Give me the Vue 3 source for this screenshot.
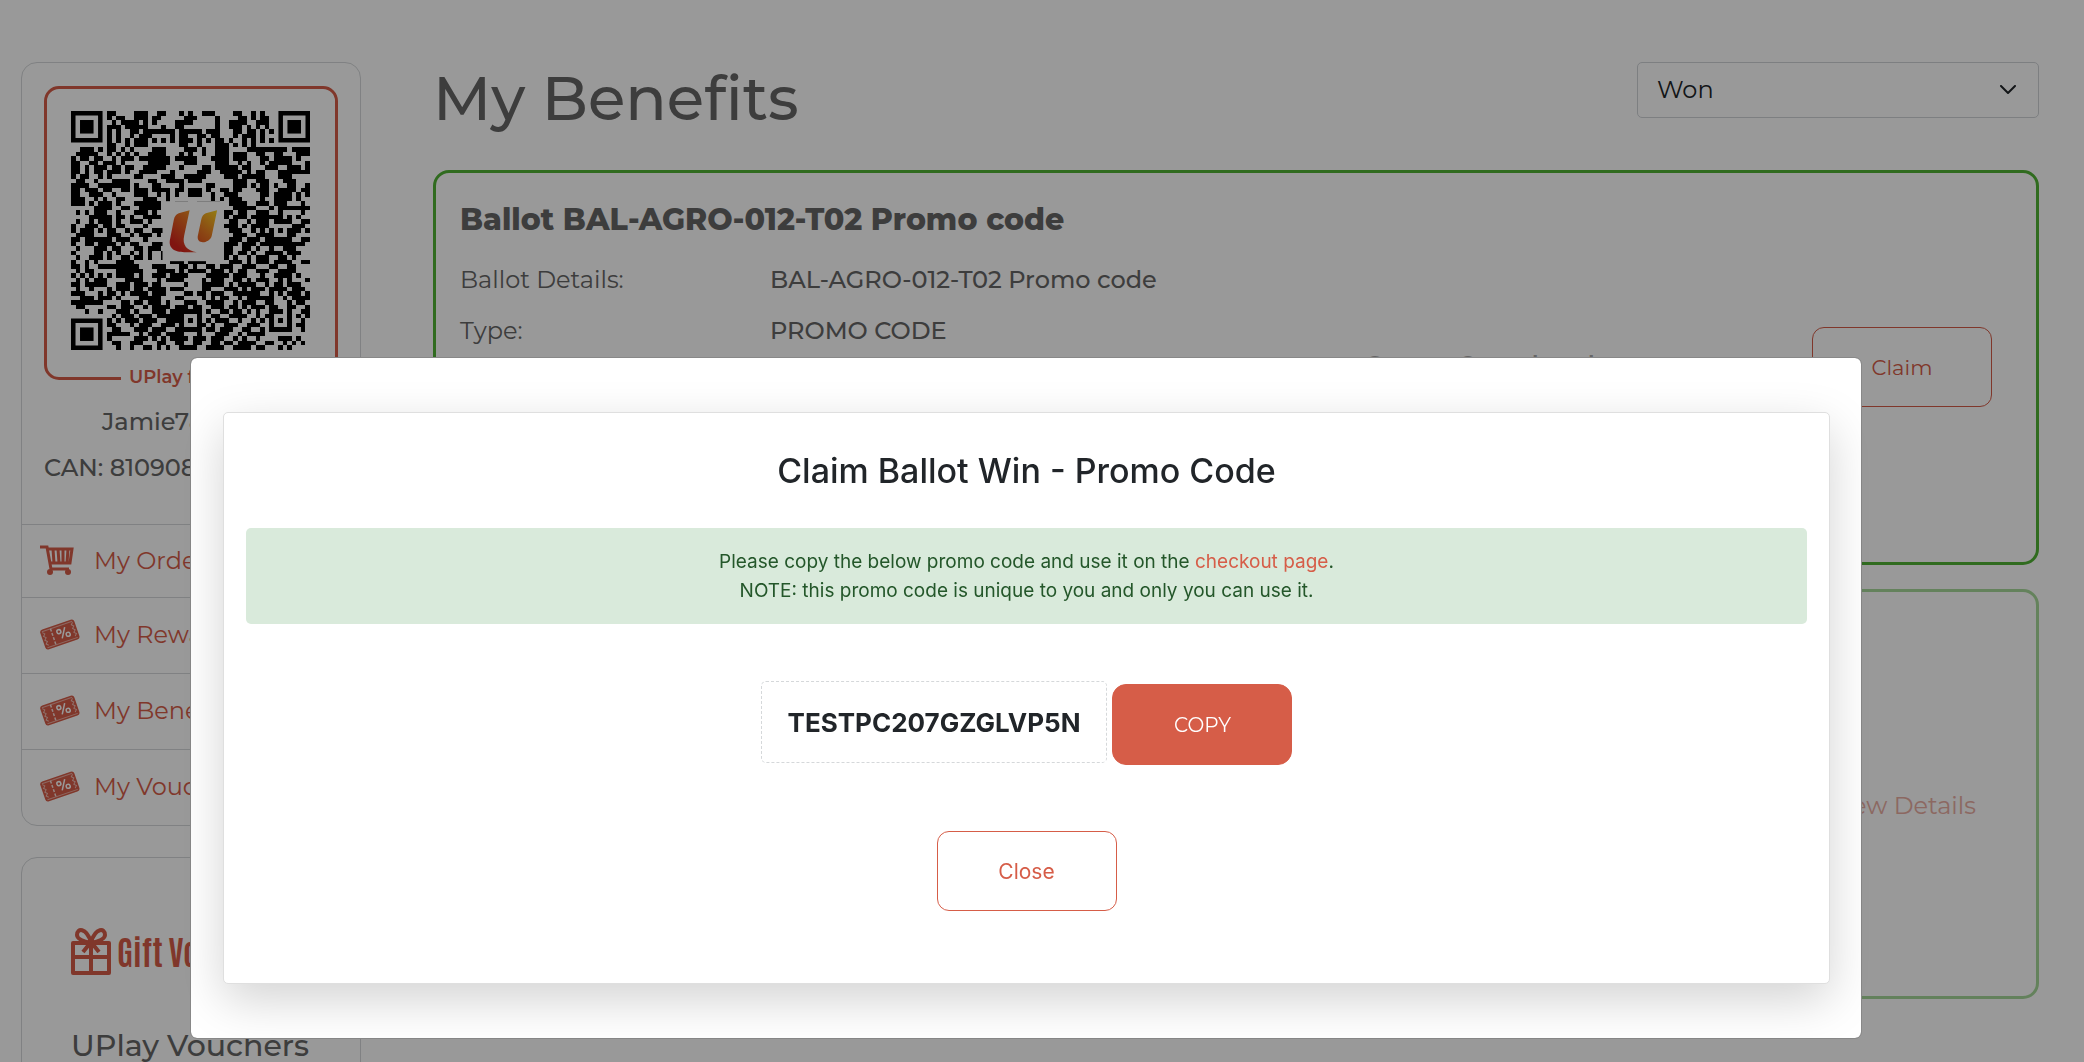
<script setup>
import { ref } from 'vue'

const filter = ref('Won')
const menu = [
  { label: 'My Orders', icon: 'cart' },
  { label: 'My Rewards', icon: 'ticket' },
  { label: 'My Benefits', icon: 'ticket' },
  { label: 'My Vouchers', icon: 'ticket' },
]

// Dark module runs of the membership code, one string per row (finder corners are drawn apart).
const rows = [
  '8-9 14-16 19-20 24 26 29-31 36-37 40 42',
  '8 10-11 14-16 18-19 25-27 32 37-38 40 42-43',
  '9 11-14 16 18 23-26 32 35-38 41-43',
  '8-10 12-16 20 23-24 32 35-37 39 41 43',
  '8 10 13-14 16-22 24-28 30-32 36-37 39-40 42 44',
  '8 10 13 15-17 22 24-25 28-29 31-32 36 38-40 42',
  '8 10 12 14-16 18 20 22 24-25 26 28 30 32-33 35 38 40 42 44',
  '8-9 12 14-15 16 24-25 28 32-34 36 38 40',
  '2-4 6 8-9 11 13 18-20 25-27 29 32-34 39-47 49-52',
  '1-4 5 8 10 12 14 17-20 24 26 29 32-34 36-38 41-42 45-46 50-52',
  '0 2-3 5-6 9 11-13 15-21 23-27 31-34 36-38 42-43 45-48 50',
  '0-1 4-5 7-9 11 17-21 25-27 32-34 37 39 42 44-48 52',
  '0-1 3 5-7 9-10 12-13 16-20 24 29-30 32-36 38-39 43-45 48-50 52',
  '0-1 3 5-6 8-10 12 15-18 22 28-30 33-37 39 41-42 46-51 52',
  '0 2-3 6 8 14-15 20-22 25-29 34-36 38-42 46-48',
  '1-2 5 9-12 17-18 21-24 26-28 36-37 38 41-43 47-49',
  '0-3 6-8 9-12 14 18 19 24 30-31 36-38 40 42-43 45 48-49 52',
  '0-1 3-5 7-8 11-12 14-16 18-21 23-24 26-28 30 33-34 36-37 41-43 46-49 51-52',
  '0-1 4-6 9 14-16 19 21 23 26-28 31 34-36 42-43 45-48 50 52',
  '0-2 5 7 10-11 16-18 21 31 33 35-37 42 45-47 48 50',
  '0-2 4 6-8 10 14-19 21 23-25 28-30 31-32 35-38 41-43 45-47 51',
  '5-8 11 12 15-19 36-39 40 44 46-48 49-52',
  '1 3 5-7 10 14-16 18 34-35 37-38 41-43 46 51',
  '4-8 10-11 13 16-19 34 36-38 40-42 43-46 48 50',
  '1 4 6-8 10 13-15 17 35-36 39 41-43 45-48 51-52',
  '0 3-5 7-8 10-11 16 34-36 38 40-43 49-51',
  '0 2-4 6 8-9 12 14-15 18-20 35-37 40 42 44 46 48-50 52',
  '1-4 8-10 13 15-17 19 36-38 41-43 44 48 49',
  '0-1 3-8 10-12 16 35-37 39-41 43-48 51-52',
  '0 3-4 6-8 9 11 13-14 18-20 34-36 38-40 42-51',
  '1 5-7 9-10 14-15 17-19 34-35 38-39 41 44 47-49',
  '0 5-6 8 10 13 15 17 20 34-35 37-38 40 43-46 48-50',
  '1 4-6 8 11-12 14-15 17 20 34 36 39 41-43 46-47 49',
  '0 3 5 10-12 13 22-24 26-29 35-37 39 41-43 45-48 51-52',
  '0-1 3 6-7 8-14 18-20 24-25 27 30-31 33-35 38-40 44-45 48-49',
  '1 3-4 10-15 19-22 24 26-29 31-33 35 37-38 41-43 46-49',
  '0 2 4 6 8 10-13 15 18-20 22-25 30-34 36-38 42 45-48 50',
  '1 3 5-7 12-15 19 21-24 29 31-33 36-37 39 41-43 46 48 52',
  '0-1 3-7 10-12 14-16 18-19 25 29-33 35 37-40 43 45-46 48-50',
  '1 4 8 10-12 14-15 17-20 22-24 29-30 34-36 38 40-42 44-47 49-51',
  '0-2 6 8-9 11 13-16 18-20 25-26 28-29 31-33 36-41 44 46 48-50 52',
  '2-4 6-8 10 15-19 23-24 29 31 33-34 37 39-43 44 47 49-52',
  '0-3 4-6 11-12 14-15 17-19 21 25-27 30-33 36 38-40 43-44 48 50-51',
  '1-2 8-9 11-13 16 18-21 23-25 27-28 31-33 35-36 38 40-42 44-45 48-49 52',
  '3 6 10-12 14 18-20 22-28 30 33-34 36-37 39 41 44-46 48 51-52',
  '9 11-13 15-17 19-24 28 31-32 35-38 41 43-44 48 50 52',
  '8 10 12-14 16-18 21-24 26 28 30 32-34 37 40 42 44 46 48 51',
  '8-9 13 15-17 20-22 24 28-29 31 34-36 39-41 44 48 50-51',
  '9-10 14-16 18-20 23-28 30-31 33-35 38-39 42 44-48 51',
  '8-12 15 17-19 21-24 28 32-34 37 39-42',
  '8 14-16 18 20 22-25 27-29 31-33 36 38 41 46-48 50',
  '9-10 13-15 19-20 23-24 27-28 31-32 34-35 37-40 43-44 47 49 51',
  '10 13 16-17 19 21 24-27 30-33 36-39 41-42 46 48',
]
const modules = rows
  .map((row, y) =>
    row.split(' ').map((run) => {
      const [a, b = a] = run.split('-').map(Number)
      return `M${a} ${y}h${b - a + 1}v1H${a}z`
    }).join('')
  )
  .join('')
</script>

<template>
  <div class="page">
    <aside class="sidebar">
      <section class="panel profile">
        <div class="member">
          <figure class="code-frame">
            <svg class="qr" viewBox="0 0 53 53" role="img" aria-label="Membership code">
              <path :d="modules" shape-rendering="crispEdges" />
              <g v-for="[x, y] in [[0, 0], [46, 0], [0, 46]]" :key="`${x}-${y}`">
                <path :d="`M${x} ${y}h7v7h-7zm1 1v5h5v-5z`" fill-rule="evenodd" />
                <rect :x="x + 2" :y="y + 2" width="3" height="3" />
              </g>
              <rect x="20.3" y="20" width="13.5" height="13.3" fill="#fff" />
              <defs>
                <linearGradient id="flame" x1="0" y1="1" x2="1" y2="0">
                  <stop offset="0.15" stop-color="#d5241c" />
                  <stop offset="0.6" stop-color="#e87722" />
                  <stop offset="1" stop-color="#f7d11e" />
                </linearGradient>
              </defs>
              <path
                fill="url(#flame)"
                d="M26.3 22l-2.4.7q-.9.4-1.1 1.4l-.8 4.2c-.6 2.300 1.200 3 3.100 3h2.800c-2.200-.3-3.300-1.600-2.800-3.700zM32.400 22l-2.500.7q-.8.4-1 1.300l-.8 3.800c-.2 2 2.600 1.500 3.100-.1z"
              />
            </svg>
            <figcaption>UPlay for All</figcaption>
          </figure>
          <p class="name">Jamie7890123</p>
          <p class="can">CAN: 8109081234567</p>
        </div>
        <nav>
          <a v-for="item in menu" :key="item.label" href="#" :class="item.icon">
            <svg v-if="item.icon === 'cart'" width="40" height="34" viewBox="0 0 40 34" fill="none" stroke="currentColor">
              <path d="M0 3h7l4 22h18" stroke-width="3" />
              <path d="M7 5h25l-2 14H10M13 5l1 14M18 5l1 14M23 5v14M28 5l-1 14" stroke-width="3" />
              <circle cx="10" cy="28" r="3" fill="currentColor" stroke="none" />
              <circle cx="28" cy="28" r="3" fill="currentColor" stroke="none" />
            </svg>
            <svg v-else width="40" height="34" viewBox="0 0 40 34">
              <g transform="rotate(-19 20 17)">
                <rect x="2" y="6" width="36" height="21" rx="3" fill="currentColor" />
                <path d="M4 8h32M4 25h32" stroke="#fff" stroke-opacity=".5" stroke-width="1" />
                <path d="M4 9l2 2-2 2 2 2-2 2 2 2-2 2 2 2M36 9l-2 2 2 2-2 2 2 2-2 2 2 2-2 2" fill="none" stroke="#fff" stroke-opacity=".6" />
                <path d="M13 8v17" stroke="#fff" stroke-opacity=".8" stroke-width="1.500" stroke-dasharray="3 1.500" />
                <path d="M21 21l6-10" stroke="#fff" stroke-width="1.500" />
                <circle cx="20" cy="13.500" r="2" fill="none" stroke="#fff" stroke-width="1.500" />
                <circle cx="28" cy="19" r="2" fill="none" stroke="#fff" stroke-width="1.500" />
              </g>
            </svg>
            <span>{{ item.label }}</span>
          </a>
        </nav>
      </section>

      <section class="panel gift">
        <div class="gift-brand">
          <svg width="40" height="47" viewBox="0 0 40 47" fill="none" stroke="currentColor" stroke-width="4" stroke-linejoin="round">
            <path d="M2 15h36v30H2zM2 29h36M20 15v30" />
            <path d="M20 14C15-1 6 0 6 7q0 5 14 8 14-3 14-8C34 0 25-1 20 14l-8 10M20 14l8 10" />
          </svg>
          <span>Gift Vouchers</span>
        </div>
        <h2>UPlay Vouchers</h2>
      </section>
    </aside>

    <main>
      <header class="title-bar">
        <h1>My Benefits</h1>
        <div class="select-wrap">
          <select v-model="filter" aria-label="Benefit status">
            <option>Won</option>
            <option>Applied</option>
          </select>
          <svg width="18" height="10" viewBox="0 0 18 10" fill="none" stroke="#212529" stroke-width="2" stroke-linecap="round" stroke-linejoin="round"><path d="M2 1l7 7 7-7" /></svg>
        </div>
      </header>

      <article class="benefit">
        <div class="info">
          <h3>Ballot BAL-AGRO-012-T02 Promo code</h3>
          <dl>
            <dt>Ballot Details:</dt>
            <dd>BAL-AGRO-012-T02 Promo code</dd>
            <dt>Type:</dt>
            <dd>PROMO CODE</dd>
          </dl>
        </div>
        <p class="status">Status: Completed</p>
        <button type="button" class="outline">Claim</button>
      </article>

      <article class="benefit past">
        <a href="#">View Details</a>
      </article>
    </main>

    <div class="overlay">
      <div class="dialog" role="dialog" aria-modal="true" aria-labelledby="claim-title">
        <div class="card">
          <h2 id="claim-title">Claim Ballot Win - Promo Code</h2>
          <p class="notice">
            Please copy the below promo code and use it on the <a href="#">checkout page</a>.<br />
            NOTE: this promo code is unique to you and only you can use it.
          </p>
          <div class="promo">
            <strong>TESTPC207GZGLVP5N</strong>
            <button type="button" class="solid">COPY</button>
          </div>
          <button type="button" class="outline close">Close</button>
        </div>
      </div>
    </div>
  </div>
</template>

<style>
body {
  overflow: hidden;
}
</style>

<style scoped>
.page {
  --coral: #d65d48;
  display: flex;
  gap: 72px;
  box-sizing: border-box;
  height: 100vh;
  padding: 62px 45px 0 21px;
  overflow: hidden;
  background: #fff;
  color: #666;
  font: 500 24px/32px Montserrat, Inter, sans-serif;
}
.page * {
  box-sizing: border-box;
}
h1, h2, h3, p, dl, dd, figure {
  margin: 0;
}
a {
  color: var(--coral);
  text-decoration: none;
}
button {
  width: 180px;
  height: 80px;
  border: 1px solid var(--coral);
  font-family: inherit;
  font-weight: 400;
  cursor: pointer;
}
.outline {
  border-radius: 12px;
  background: none;
  color: var(--coral);
  font-size: 21px;
}
.sidebar {
  flex: 0 0 340px;
  min-width: 0;
}
.panel {
  border: 1px solid #d5d8da;
  border-radius: 16px;
  overflow: hidden;
  white-space: nowrap;
}
.member {
  height: 461px;
  padding: 23px 22px 0;
}
.code-frame {
  position: relative;
  height: 294px;
  border: 3px solid var(--coral);
  border-radius: 15px;
  padding: 22px 24px;
}
.qr {
  display: block;
  width: 239px;
  height: 239px;
}
figcaption {
  position: absolute;
  bottom: -12px;
  left: 74px;
  padding: 0 8px;
  background: #fff;
  color: var(--coral);
  font-size: 18px;
  font-weight: 600;
  line-height: 24px;
}
.name {
  margin-top: 26px;
  padding-left: 58px;
}
.can {
  margin-top: 14px;
}
nav a {
  display: flex;
  align-items: center;
  gap: 14px;
  height: 76px;
  padding: 0 0 2px 18px;
  border-top: 1px solid #d5d8da;
  font-weight: 400;
}
nav a.cart {
  height: 73px;
  padding-bottom: 0;
}
.gift {
  height: 300px;
  margin-top: 31px;
  padding: 63px 49px;
}
.gift-brand {
  display: flex;
  align-items: center;
  gap: 6px;
  height: 60px;
  color: var(--coral);
  font: 700 33px/60px Antonio, "Roboto Condensed", Roboto, sans-serif;
}
.gift h2 {
  margin-top: 45px;
  font-size: 30px;
  font-weight: 500;
  line-height: 40px;
}
main {
  flex: 1;
  min-width: 0;
}
.title-bar {
  display: flex;
  justify-content: space-between;
  height: 108px;
}
h1 {
  font-size: 61px;
  font-weight: 500;
  line-height: 72px;
}
.select-wrap {
  position: relative;
  width: 402px;
  height: 56px;
}
.select-wrap svg {
  position: absolute;
  top: 23px;
  right: 22px;
  pointer-events: none;
}
select {
  width: 100%;
  height: 100%;
  padding: 0 19px 1px;
  appearance: none;
  border: 1px solid #d0d4d8;
  border-radius: 5px;
  background: #fff;
  color: #212529;
  font: 400 24px Montserrat, Inter, sans-serif;
}
.benefit {
  display: flex;
  height: 395px;
  margin-bottom: 24px;
  padding: 0 44px 0 24px;
  border: 3px solid #50b335;
  border-radius: 16px;
}
.info {
  flex: 1;
  padding-top: 27px;
}
h3 {
  font-size: 30px;
  font-weight: 800;
  line-height: 40px;
}
dl {
  display: grid;
  grid-template-columns: 310px auto;
  row-gap: 19px;
  margin-top: 24px;
}
dt {
  font-weight: 400;
}
.status {
  flex: 0 0 445px;
  margin-top: 176px;
  color: #aaa;
  font-weight: 600;
}
.benefit .outline {
  margin-top: 154px;
}
.past {
  justify-content: flex-end;
  align-items: center;
  height: 410px;
  padding: 24px 60px 0;
  opacity: 0.5;
}
.past a {
  font-weight: 400;
}
.overlay {
  position: fixed;
  inset: 0;
  padding: 357px 222px 20px 190px;
  background: rgba(0, 0, 0, 0.4);
  font-family: Inter, sans-serif;
}
.dialog {
  padding: 54px 31px 54px 32px;
  border: 1px solid #888;
  border-radius: 7px;
  background: #fff;
  background-clip: padding-box;
}
.card {
  display: flex;
  flex-direction: column;
  align-items: center;
  padding: 36px 22px 72px;
  border: 1px solid #dfdfdf;
  border-radius: 5px;
  background: #fff;
  box-shadow: 0 16px 48px rgba(0, 0, 0, 0.175);
  color: #212529;
}
.card h2 {
  font-size: 34px;
  font-weight: 500;
  line-height: 44px;
}
.notice {
  align-self: stretch;
  margin-top: 35px;
  padding: 19px;
  border-radius: 5px;
  background: #d9eadb;
  color: #24572a;
  font-size: 19px;
  font-weight: 400;
  line-height: 29px;
  text-align: center;
}
.promo {
  display: flex;
  gap: 5px;
  margin-top: 57px;
}
.promo strong {
  height: 82px;
  padding: 0 26px;
  border: 1px dashed #d5d8da;
  border-radius: 5px;
  font-size: 26px;
  font-weight: 700;
  line-height: 82px;
}
.solid {
  height: 81px;
  margin-top: 3px;
  border-radius: 14px;
  background: var(--coral);
  color: #fff;
  font-family: Montserrat, Inter, sans-serif;
  font-size: 20px;
}
.close {
  margin-top: 66px;
}
</style>
